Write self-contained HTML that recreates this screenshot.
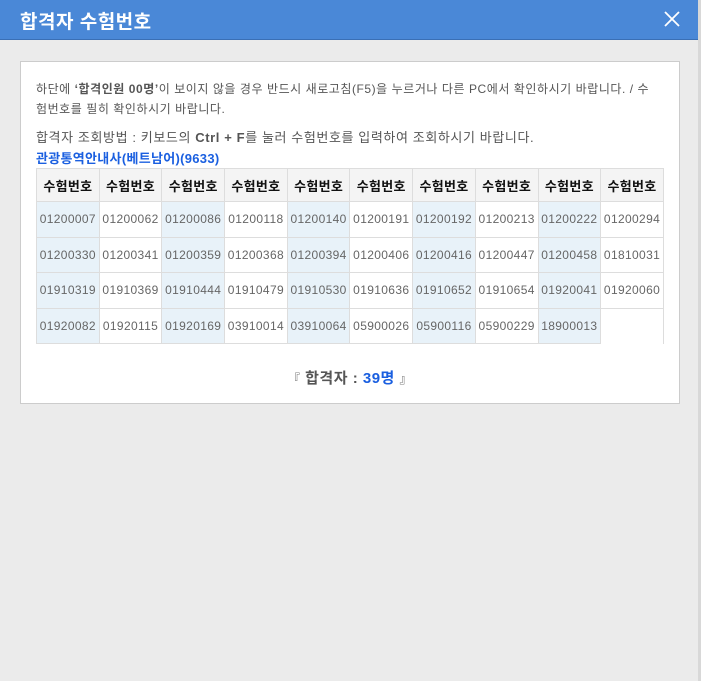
<!DOCTYPE html>
<html><head><meta charset="utf-8"><style>
*{margin:0;padding:0;box-sizing:border-box}
body{width:701px;height:681px;background:#ebebeb;font-family:"Liberation Sans","Noto Sans CJK KR",sans-serif;position:relative;overflow:hidden}
.hd{position:absolute;left:0;top:0;width:698px;height:40px;background:#4a88d7;border-bottom:1px solid #3a6fb5}
.hd h1{position:absolute;left:20px;top:7px;color:#fff;font-size:19px;font-weight:bold;letter-spacing:0.5px}
.x{position:absolute;right:18px;top:11px}
.edge{position:absolute;left:698px;top:0;width:3px;height:681px;background:#d8d8d8}
.box{position:absolute;left:20px;top:61px;width:660px;height:343px;background:#fff;border:1px solid #ccc}
.t{position:absolute;left:15px;font-size:12px;color:#555;white-space:nowrap;letter-spacing:0.55px}
table{position:absolute;left:15px;top:106px;border-collapse:collapse;table-layout:fixed;width:627px}
td,th{width:62.7px;border:1px solid #ddd;text-align:center;font-size:12px;color:#666;font-weight:normal;padding:0;white-space:nowrap}
th{height:33px;background:#f4f4f4;color:#111;font-weight:bold;font-size:13px;letter-spacing:0.3px}
td{height:35.5px;letter-spacing:0.35px}
td:nth-child(odd){background:#e8f2f9}
td.e{background:#fff;border-bottom:none;border-left:1px solid #ddd}
.tot{position:absolute;left:0;width:100%;top:305px;text-align:center;font-size:15px;font-weight:bold;color:#555;letter-spacing:0.5px}
</style></head><body>
<div class="hd"><h1>합격자 수험번호</h1>
<svg class="x" width="16" height="16" viewBox="0 0 16 16"><path d="M1 1L15 15M15 1L1 15" stroke="#fff" stroke-width="1.8"/></svg></div>
<div class="edge"></div>
<div class="box">
<div class="t" style="top:18px">하단에 <b>‘합격인원 00명’</b>이 보이지 않을 경우 반드시 새로고침(F5)을 누르거나 다른 PC에서 확인하시기 바랍니다. / 수</div>
<div class="t" style="top:38px">험번호를 필히 확인하시기 바랍니다.</div>
<div class="t" style="top:65px;font-size:13px;letter-spacing:0.6px">합격자 조회방법 : 키보드의 <b>Ctrl + F</b>를 눌러 수험번호를 입력하여 조회하시기 바랍니다.</div>
<div class="t" style="top:86px;color:#1a5fe0;font-weight:bold;font-size:13px;letter-spacing:0.3px">관광통역안내사(베트남어)(9633)</div>
<table>
<tr><th>수험번호</th><th>수험번호</th><th>수험번호</th><th>수험번호</th><th>수험번호</th><th>수험번호</th><th>수험번호</th><th>수험번호</th><th>수험번호</th><th>수험번호</th></tr>
<tr><td>01200007</td><td>01200062</td><td>01200086</td><td>01200118</td><td>01200140</td><td>01200191</td><td>01200192</td><td>01200213</td><td>01200222</td><td>01200294</td></tr>
<tr><td>01200330</td><td>01200341</td><td>01200359</td><td>01200368</td><td>01200394</td><td>01200406</td><td>01200416</td><td>01200447</td><td>01200458</td><td>01810031</td></tr>
<tr><td>01910319</td><td>01910369</td><td>01910444</td><td>01910479</td><td>01910530</td><td>01910636</td><td>01910652</td><td>01910654</td><td>01920041</td><td>01920060</td></tr>
<tr><td>01920082</td><td>01920115</td><td>01920169</td><td>03910014</td><td>03910064</td><td>05900026</td><td>05900116</td><td>05900229</td><td>18900013</td><td class="e"></td></tr>
</table>
<div class="tot"><span style="font-weight:normal;font-size:12px">『</span> 합격자 : <span style="color:#1a5fe0">39명</span> <span style="font-weight:normal;font-size:12px">』</span></div>
</div>
</body></html>
